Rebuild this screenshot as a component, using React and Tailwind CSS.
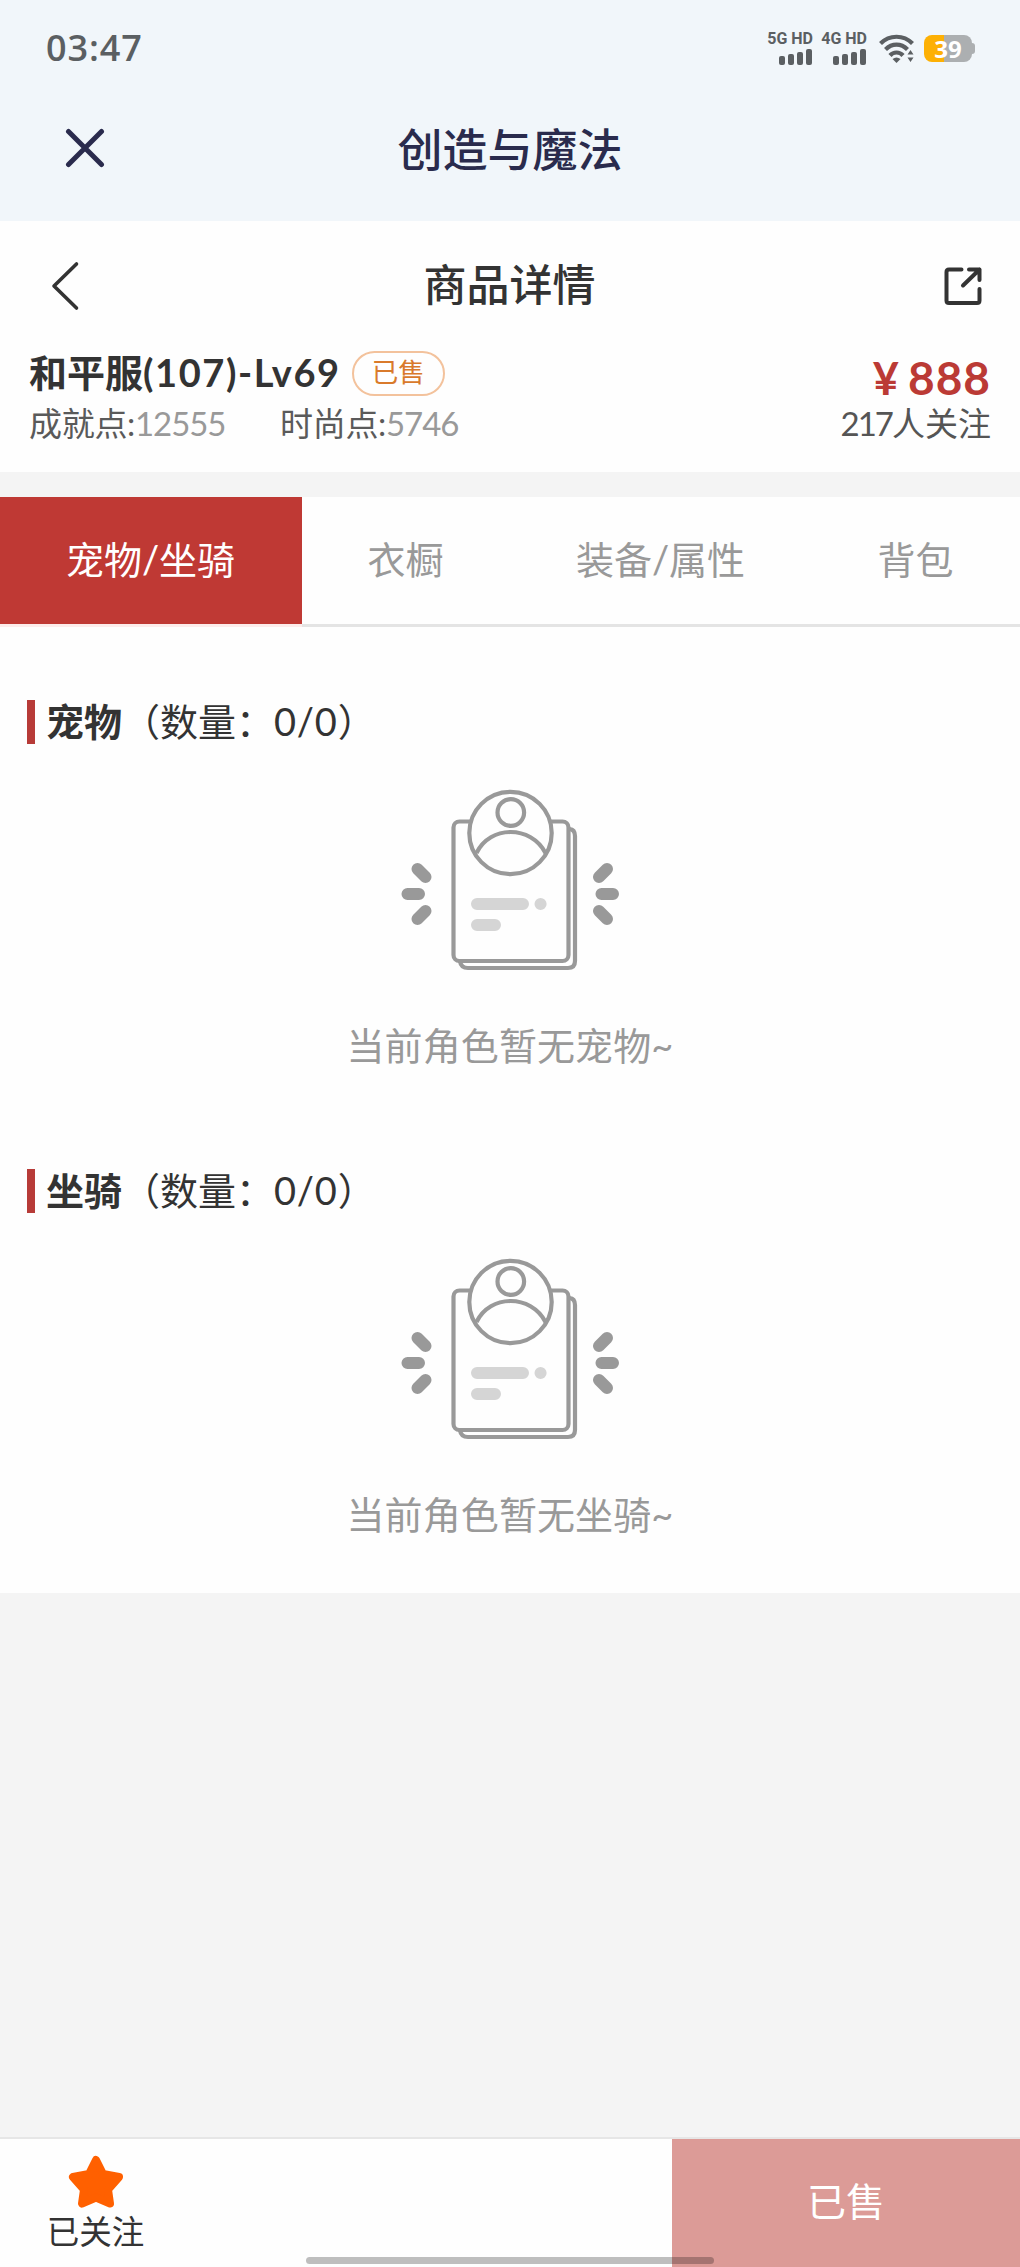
import React from "react";

const TABS = [
  { label: "宠物/坐骑", width: "w-[302px]", active: true },
  { label: "衣橱", width: "w-[208px]" },
  { label: "装备/属性", width: "w-[302px]" },
  { label: "背包", width: "w-[208px]" },
];

const SECTIONS = [
  { name: "宠物", empty: "当前角色暂无宠物" },
  { name: "坐骑", empty: "当前角色暂无坐骑" },
];

function Signal({ label }) {
  return (
    <div className="flex h-[33px] w-[46px] flex-col items-end justify-between">
      <span className="whitespace-nowrap font-[Roboto] text-[16px] leading-[14px] font-bold">
        {label}
      </span>
      <svg width="34" height="16" viewBox="0 0 34 16" fill="currentColor">
        <rect x="0" y="7" width="6" height="9" rx="2" />
        <rect x="9" y="5" width="6" height="11" rx="2" />
        <rect x="18" y="3" width="6" height="13" rx="2" />
        <rect x="27" y="0" width="6" height="16" rx="2" />
      </svg>
    </div>
  );
}

function WifiIcon() {
  return (
    <svg width="36" height="30" viewBox="0 0 36 30" fill="none" stroke="currentColor" strokeWidth="4.2">
      <path d="M1.5 9.5C10.5 0.5 24.5 0.5 33.5 9.5" />
      <path d="M6.5 15.5C13 9 22 9 28.5 15.5" />
      <path d="M11 21.5C14.5 17.5 20.5 17.5 24 21.500" />
      <path d="M13.5 25Q17.5 22 21.500 25L17.500 29Z" fill="currentColor" stroke="none" />
      <path d="M28.5 20.5L31.5 16L34.5 20.5ZM28.5 23.5H34.5L31.5 28Z" fill="currentColor" stroke="none" />
    </svg>
  );
}

function Battery({ level }) {
  return (
    <div className="flex items-center">
      <div className="flex h-[27px] w-12 items-center justify-center rounded-[8px] bg-[linear-gradient(90deg,#fdb004_42%,#acafb1_42%)] font-['Open_Sans'] text-[24px] font-bold text-white">
        {level}
      </div>
      <div className="h-[11px] w-[3px] rounded-r-[3px] bg-[#acafb1]" />
    </div>
  );
}

function StatusBar() {
  return (
    <div className="flex h-[97px] items-center justify-between pr-[45px] pl-[46px] text-[#5b5f62]">
      <span className="pb-[2px] font-['Open_Sans'] text-[36px] font-semibold tracking-[0.9px]">03:47</span>
      <div className="flex items-center">
        <Signal label="5G HD" />
        <div className="w-2" />
        <Signal label="4G HD" />
        <div className="mr-[9px] ml-3">
          <WifiIcon />
        </div>
        <Battery level={39} />
      </div>
    </div>
  );
}

function EmptyIllustration() {
  return (
    <svg width="260" height="220" viewBox="0 0 260 220" fill="none" stroke="#999" strokeWidth="4.2">
      <path d="M80 191.5Q81 198 88 198H188Q195 198 195 191V66Q195 59.5 189.5 59" />
      <rect x="73.500" y="51.5" width="115" height="139.5" rx="6" fill="#fefefe" />
      <circle cx="130.5" cy="63" r="41.2" fill="#fefefe" />
      <circle cx="130.8" cy="42.5" r="13.3" />
      <path d="M96.5 83C110 55 151 55 165.5 83" />
      <g strokeWidth="12" strokeLinecap="round">
        <path d="M37.5 99L45.5 107M27.5 124H39M37.5 149L45.5 141" />
        <path d="M227 99L219 107M233 124H221.5M227 149L219 141" />
      </g>
      <g stroke="#d5d5d5" strokeWidth="12" strokeLinecap="round">
        <path d="M97 134H143M160.5 134H160.6M97 155H115" />
      </g>
    </svg>
  );
}

function Section({ name, empty }) {
  return (
    <section className="h-[469px]">
      <div className="flex h-11 pl-[27px] text-[38px] text-[#333]">
        <div className="h-11 w-2 bg-[#b73b38]" />
        <div className="flex items-center pb-[3px]">
          <h2 className="ml-[11px] font-bold">{name}</h2>
          <span>（数量：</span>
          <span className="tracking-[0.8px]">0/0</span>
          <span>）</span>
        </div>
      </div>
      <div className="mt-[26px] flex justify-center pr-px">
        <EmptyIllustration />
      </div>
      <p className="mt-[36px] text-center text-[38px] leading-[38px] tracking-[0.1px] text-[#999]">{empty}~</p>
    </section>
  );
}

export default function App() {
  return (
    <div className="flex h-[2267px] w-[1020px] flex-col overflow-hidden bg-[#f4f4f4] font-[Lato,'Noto_Sans_CJK_SC',sans-serif] leading-none text-[#333]">
      <header className="h-[221px] shrink-0 bg-[#f1f6fa]">
        <StatusBar />
        <div className="grid h-[102px] grid-cols-[200px_1fr_200px] items-center text-[#2a2b4d]">
          <svg className="ml-[65px]" width="40" height="40" viewBox="0 0 40 40" stroke="currentColor" strokeWidth="5" strokeLinecap="round">
            <path d="M3.500 3.500L36.500 36.500M36.500 3.500L3.500 36.500" />
          </svg>
          <h1 className="pt-1 text-center text-[45px] font-medium">创造与魔法</h1>
        </div>
      </header>

      <div className="h-[251px] shrink-0 bg-[#fefefe]">
        <div className="grid h-[130px] grid-cols-[200px_1fr_200px] items-center">
          <svg className="ml-[50px]" width="30" height="52" viewBox="0 0 30 52" fill="none" stroke="currentColor" strokeWidth="3.6" strokeLinecap="round" strokeLinejoin="round">
            <path d="M26.500 4L4 26L26.500 48" />
          </svg>
          <h2 className="pr-px pb-[3px] text-center text-[43px] font-medium">商品详情</h2>
          <svg className="mr-[37px] justify-self-end" width="40" height="40" viewBox="0 0 40 40" fill="none" stroke="currentColor" strokeWidth="4" strokeLinecap="round" strokeLinejoin="round">
            <path d="M18.500 3.500H6Q3.500 3.500 3.500 6V34.500Q3.500 37 6 37H34Q36.500 37 36.500 34.500V23" />
            <path d="M26 3.500H36.500V14M36.500 3.500L20 19.500" />
          </svg>
        </div>
        <div className="flex justify-between pr-[29px] pl-[29px]">
          <div>
            <div className="flex h-[45px] items-center">
              <span className="pb-[3px] text-[38px] font-bold">
                和平服<span className="tracking-[1.6px]">(107)-Lv69</span>
              </span>
              <span className="ml-[11px] flex h-[45px] w-[93px] items-center justify-center rounded-full border-[2.5px] border-[#f3c29c] pb-[3px] text-[26.5px] text-[#d97a2b]">
                已售
              </span>
            </div>
            <div className="mt-[10px] flex h-[34px] items-center text-[33px] text-[#999]">
              <span className="w-[251px] tracking-[-1.1px]"><span className="tracking-[-0.3px] text-[#5a5a5a]">成就点:</span>12555</span>
              <span className="tracking-[-1.1px]"><span className="tracking-[-0.3px] text-[#5a5a5a]">时尚点:</span>5746</span>
            </div>
          </div>
          <div className="flex flex-col items-end">
            <div className="flex h-[54px] items-center text-[46px] font-bold text-[#bb3a35]">
              <span className="mr-[9px] text-[45px]">¥</span>
              <span className="tracking-[1px]">888</span>
            </div>
            <div className="mt-px flex h-[34px] items-center text-[33px] text-[#555]">
              <span className="tracking-[-2px]">217</span>人关注
            </div>
          </div>
        </div>
      </div>

      <nav className="mt-[25px] flex h-[130px] shrink-0 bg-[#fefefe] text-[38px]">
        {TABS.map((tab) => (
          <div
            key={tab.label}
            className={`${tab.width} flex h-[130px] items-center justify-center border-b-[3px] pr-px pb-[3px] ${
              tab.active ? "border-[#fdeceb] bg-[#bf3934] bg-clip-padding text-white" : "border-[#e4e4e4] text-[#999]"
            }`}
          >
            {tab.label}
          </div>
        ))}
      </nav>

      <main className="h-[966px] shrink-0 bg-[#fefefe] pt-[73px]">
        {SECTIONS.map((section) => (
          <Section key={section.name} {...section} />
        ))}
      </main>

      <footer className="relative mt-auto flex h-[130px] shrink-0 border-t-2 border-[#e6e6e6] bg-[#fefefe]">
        <div className="flex w-[191px] flex-col items-center pt-[14px]">
          <svg width="60" height="58" viewBox="0 0 60 58" fill="#ff6000" stroke="#ff6000" strokeWidth="8" strokeLinejoin="round">
            <path d="M30 7L37 21L53 24L42 36.5L44 50.5L30 44.5L16 50.5L18 36.5L7 24L23 21Z" />
          </svg>
          <span className="mt-[5px] text-[32.5px]">已关注</span>
        </div>
        <button className="ml-auto w-[348px] bg-[#dc9b97] pb-1 text-[39px] text-white">已售</button>
        {/* system gesture bar */}
        <div className="absolute bottom-[3px] left-[306px] h-[7px] w-[408px] rounded-full bg-black/25" />
      </footer>
    </div>
  );
}
